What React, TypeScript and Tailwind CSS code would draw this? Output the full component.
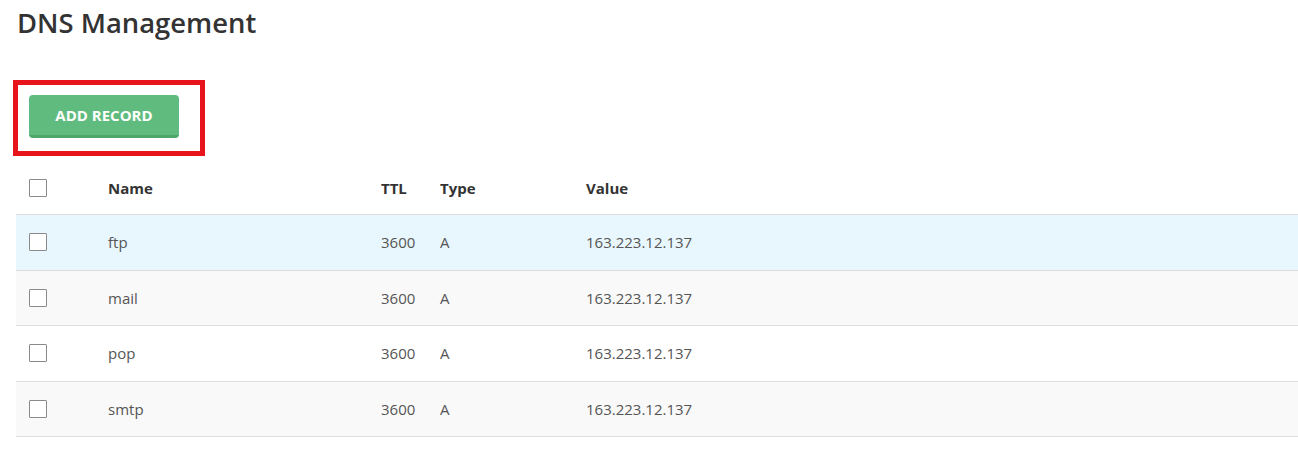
import React from "react";

const rows = [
  { name: "ftp", ttl: "3600", type: "A", value: "163.223.12.137", bg: "bg-[#e8f7fd]" },
  { name: "mail", ttl: "3600", type: "A", value: "163.223.12.137", bg: "bg-[#f9f9f9]" },
  { name: "pop", ttl: "3600", type: "A", value: "163.223.12.137", bg: "bg-white" },
  { name: "smtp", ttl: "3600", type: "A", value: "163.223.12.137", bg: "bg-[#f9f9f9]" },
];

function Box() {
  return <div className="w-[18px] h-[18px] border border-[#8a8a8a] bg-white rounded-[1px]" />;
}

export default function App() {
  return (
    <div
      className="w-[1298px] h-[452px] bg-white text-[15px] text-[#555]"
      style={{ fontFamily: '"Open Sans", "Noto Sans", sans-serif' }}
    >
      <h1 className="pl-[17px] pt-[4px] text-[27.4px] leading-[37px] font-semibold text-[#333]">
        DNS Management
      </h1>
      <div className="ml-[13px] mt-[39px] w-[192px] h-[76px] border-[5px] border-[#e8141b] pl-[11px] pt-[10px]">
        <button className="w-[150px] h-[43px] rounded-[4px] bg-[#5fbb7e] border-b-[3px] border-[#4ea66b] text-white font-bold text-[15px]">
          ADD RECORD
        </button>
      </div>
      <div className="ml-[16px] mt-[6px]">
        <div className="flex items-center h-[53px] border-b border-[#ddd] font-bold text-[#333]">
          <div className="w-[92px] pl-[13px]"><Box /></div>
          <div className="w-[273px]">Name</div>
          <div className="w-[59px]">TTL</div>
          <div className="w-[146px]">Type</div>
          <div>Value</div>
        </div>
        {rows.map((r) => (
          <div key={r.name} className={`flex items-center h-[55.5px] border-b border-[#ddd] ${r.bg}`}>
            <div className="w-[92px] pl-[13px]"><Box /></div>
            <div className="w-[273px]">{r.name}</div>
            <div className="w-[59px]">{r.ttl}</div>
            <div className="w-[146px]">{r.type}</div>
            <div>{r.value}</div>
          </div>
        ))}
      </div>
    </div>
  );
}
